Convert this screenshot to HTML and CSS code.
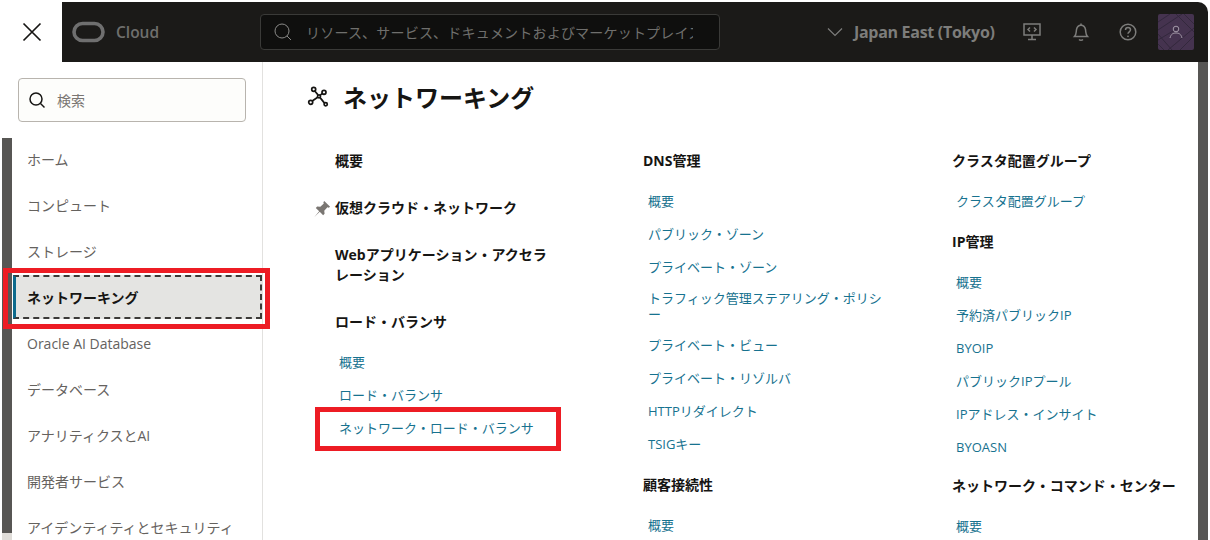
FILE: index.html
```html
<!DOCTYPE html>
<html lang="ja">
<head>
<meta charset="utf-8">
<title>ネットワーキング</title>
<link rel="stylesheet" href="styles.css">
</head>
<body>
<div class="window">
  <header class="topbar">
    <button class="close" aria-label="閉じる">
      <svg width="20" height="20" viewBox="0 0 20 20"><path d="M1.500 1.500 18.500 18.500M18.500 1.500 1.500 18.500" stroke="#161513" stroke-width="1.700" fill="none"/></svg>
    </button>
    <div class="bar">
      <svg class="logo" width="34" height="22" viewBox="0 0 34 22"><rect x="2" y="2.500" width="29" height="17" rx="8.500" fill="none" stroke="#6f6f6f" stroke-width="3.600"/></svg>
      <span class="cloud">Cloud</span>
      <div class="search">
        <svg width="20" height="20" viewBox="0 0 20 20"><circle cx="9" cy="9" r="7" fill="none" stroke="#8a8a88" stroke-width="1"/><path d="M14 14 18 18" stroke="#8a8a88" stroke-width="1"/></svg>
        <span class="search-text">リソース、サービス、ドキュメントおよびマーケットプレイス</span>
      </div>
      <div class="region">
        <svg width="16" height="10" viewBox="0 0 16 10"><path d="M1 1.500 8 8.500 15 1.500" fill="none" stroke="#7d7d7b" stroke-width="1.200"/></svg>
        <span>Japan East (Tokyo)</span>
      </div>
      <svg class="ico i-dev" width="20" height="20" viewBox="0 0 20 20" fill="none" stroke="#7d7d7b" stroke-width="1.500"><rect x="2" y="2" width="16" height="11"/><path d="M10 13v4M6 17.500h8M8 5.500 6 7.500l2 2M12 5.500l2 2-2 2"/></svg>
      <svg class="ico i-bell" width="20" height="20" viewBox="0 0 20 20" fill="none" stroke="#7d7d7b" stroke-width="1.500"><path d="M3.500 14.500c2-2 1.500-4 2-7C6 5 8 3.300 10 3.300S14 5 14.500 7.500c.5 3 0 5 2 7z"/><path d="M8 17.500c1 .9 3 .9 4 0M10 1.500v1.800"/></svg>
      <svg class="ico i-help" width="20" height="20" viewBox="0 0 20 20" fill="none" stroke="#7d7d7b" stroke-width="1.500"><circle cx="10" cy="10" r="7.800"/><path d="M7.500 8c0-1.500 1.100-2.500 2.500-2.500s2.500 1 2.500 2.300c0 2-2.500 2-2.500 4"/><circle cx="10" cy="14.300" r=".9" fill="#7d7d7b" stroke="none"/></svg>
      <div class="avatar">
        <svg width="36" height="36" viewBox="0 0 36 36"><g fill="none" stroke="#33283c" stroke-width="1"><path d="M0 8 12 0M0 16 24 0M0 26 20 14M22 36 36 22M10 36 36 14M26 0 36 10M18 0 36 18M0 20 14 36M0 30 6 36"/></g><circle cx="18" cy="15" r="2.800" fill="none" stroke="#a39aa8"/><path d="M12 24c1-4 3-5 6-5s5 1 6 5" fill="none" stroke="#a39aa8"/></svg>
      </div>
    </div>
  </header>

  <div class="body">
    <aside class="side">
      <div class="side-search">
        <svg width="18" height="18" viewBox="0 0 18 18"><circle cx="8" cy="8" r="6" fill="none" stroke="#161513" stroke-width="1.500"/><path d="M12.500 12.500 16.500 16.500" stroke="#161513" stroke-width="1.500"/></svg>
        <span>検索</span>
      </div>
      <div class="side-scroll">
        <div class="track"><div class="thumb"></div></div>
        <nav class="side-nav">
          <a class="side-item">ホーム</a>
          <a class="side-item">コンピュート</a>
          <a class="side-item">ストレージ</a>
          <a class="side-item active">ネットワーキング</a>
          <a class="side-item">Oracle AI Database</a>
          <a class="side-item">データベース</a>
          <a class="side-item">アナリティクスとAI</a>
          <a class="side-item">開発者サービス</a>
          <a class="side-item">アイデンティティとセキュリティ</a>
        </nav>
      </div>
      <div class="hl hl-side"></div>
    </aside>

    <main class="content">
      <h1 class="title">
        <svg width="20" height="20" viewBox="0 0 20 20" fill="none" stroke="#161513" stroke-width="1.700"><circle cx="5.700" cy="3.300" r="2"/><circle cx="16" cy="6.300" r="2"/><circle cx="2.700" cy="16.300" r="2"/><circle cx="17.700" cy="18.300" r="1.600"/><circle cx="11" cy="10.300" r="1.500"/><path d="M6.800 5 10 8.900M14.400 7.400 12.300 9.200M4.200 15 9.700 11.300M16.500 17.100 12.100 11.600"/></svg>
        <span>ネットワーキング</span>
      </h1>
      <div class="cols">
        <section class="col col1">
          <h2 class="head">概要</h2>
          <h2 class="head pinned">
            <svg class="pin" width="18" height="18" viewBox="0 0 16 16"><path d="M10 .8 15.200 6 14 6.800 12.800 6.400 10 9.500 10.300 12.300 9 13.500 6 10.500 1.200 15 5.500 10 2.500 7 3.700 5.700 6.500 6 9.600 3.200 9.200 2z" fill="#7a7672"/></svg>
            仮想クラウド・ネットワーク
          </h2>
          <h2 class="head">Webアプリケーション・アクセラレーション</h2>
          <h2 class="head">ロード・バランサ</h2>
          <ul class="links">
            <li>概要</li>
            <li>ロード・バランサ</li>
            <li>ネットワーク・ロード・バランサ</li>
          </ul>
          <div class="hl hl-link"></div>
        </section>
        <section class="col col2">
          <h2 class="head">DNS管理</h2>
          <ul class="links">
            <li>概要</li>
            <li>パブリック・ゾーン</li>
            <li>プライベート・ゾーン</li>
            <li class="long">トラフィック管理ステアリング・ポリシー</li>
            <li>プライベート・ビュー</li>
            <li>プライベート・リゾルバ</li>
            <li>HTTPリダイレクト</li>
            <li>TSIGキー</li>
          </ul>
          <h2 class="head">顧客接続性</h2>
          <ul class="links">
            <li>概要</li>
          </ul>
        </section>
        <section class="col col3">
          <h2 class="head">クラスタ配置グループ</h2>
          <ul class="links">
            <li>クラスタ配置グループ</li>
          </ul>
          <h2 class="head">IP管理</h2>
          <ul class="links links-ip">
            <li>概要</li>
            <li>予約済パブリックIP</li>
            <li>BYOIP</li>
            <li>パブリックIPプール</li>
            <li>IPアドレス・インサイト</li>
            <li>BYOASN</li>
          </ul>
          <h2 class="head">ネットワーク・コマンド・センター</h2>
          <ul class="links">
            <li>概要</li>
          </ul>
        </section>
      </div>
    </main>
    <div class="scrollbar"></div>
  </div>
</div>
</body>
</html>
```
FILE: styles.css
```css
* { box-sizing: border-box; }
html, body { margin: 0; padding: 0; height: 100%; overflow: hidden; background: #fff; }
body { font-family: "Open Sans", "Noto Sans CJK JP", "Noto Sans", sans-serif; color: #161513; }
.window { width: 1210px; height: 540px; padding-top: 2px; overflow: hidden; display: flex; flex-direction: column; }

.topbar { height: 60px; display: flex; flex: none; }
.close { width: 62px; height: 60px; border: 0; background: #fff; padding: 0 0 0 2px; display: flex; align-items: center; justify-content: center; }
.bar { flex: 1; margin-right: 2px; background: #1b1a18; border-top-right-radius: 10px; display: flex; align-items: center; }
.logo { margin-left: 10px; }
.cloud { margin-left: 10px; font-size: 15.500px; font-weight: 600; color: #6f6f6d; width: 144px; }
.search { width: 460px; height: 36px; background: #0f0f0e; border: 1px solid #3a3a38; border-radius: 4px; display: flex; align-items: center; padding-left: 12px; overflow: hidden; }
.search-text { margin-left: 13px; font-size: 14px; letter-spacing: .2px; color: #6f6f6d; width: 387px; white-space: nowrap; overflow: hidden; }
.region { margin-left: 107px; display: flex; align-items: center; color: #7d7d7b; font-size: 16px; font-weight: 700; width: 168px; letter-spacing: -.3px; }
.region span { margin-left: 11px; white-space: nowrap; }
.ico { flex: none; }
.i-dev { margin-left: 27px; }
.i-bell { margin-left: 29px; }
.i-help { margin-left: 27px; }
.avatar { margin-left: 20px; width: 36px; height: 36px; background: #45334f; border-radius: 2px; overflow: hidden; }
.avatar svg { display: block; }

.body { flex: 1; display: flex; min-height: 0; position: relative; }
.side { width: 263px; flex: none; border-right: 1px solid #e2e1df; position: relative; }
.side-search { margin: 16px 0 0 18px; width: 228px; height: 44px; border: 1px solid #b8b4ae; border-radius: 4px; background: #fdfdfb; display: flex; align-items: center; padding-left: 9px; font-size: 14px; color: #7a7672; }
.side-search span { margin-left: 11px; }
.side-scroll { display: flex; margin-top: 16px; }
.track { width: 10px; margin-left: 2px; height: 402px; background: #e0ddd9; flex: none; }
.thumb { height: 395px; background: #575654; }
.side-nav { flex: 1; display: flex; flex-direction: column; margin-top: -2px; }
.side-item { height: 46px; display: flex; align-items: center; padding-left: 15px; font-size: 14px; color: #65625e; white-space: nowrap; }
.side-item.active { margin: 1px 0 1px 1px; padding-left: 11px; width: 249px; height: 44px; background: #e4e4e2; border: 2px dashed #3b3a38; border-left: 3px solid #0d6a8c; font-weight: 700; color: #161513; }

.hl { position: absolute; border: 5px solid #ed1c24; pointer-events: none; }
.hl-side { left: 3px; top: 206px; width: 267px; height: 61px; }

.content { flex: 1; min-width: 0; padding: 18px 0 0 45px; }
.title { margin: 0; display: flex; align-items: center; font-size: 24px; font-weight: 700; height: 32px; }
.title svg { overflow: visible; }
.title span { margin-left: 15px; }
.cols { display: flex; margin-top: 39px; padding-left: 27px; }
.col { flex: none; position: relative; }
.col1 { width: 309px; }
.col2 { width: 308px; }
.col3 { width: 240px; }
.head { margin: 0; font-size: 14px; font-weight: 700; line-height: 20px; color: #161513; width: 220px; position: relative; }
.col2 .head { margin-left: -1px; }
.col1 .head { margin-bottom: 27px; }
.pinned .pin { position: absolute; left: -22px; top: 2px; }
.links { list-style: none; margin: 20px 0 21px; padding: 0 0 0 4px; font-size: 13px; color: #17728f; }
.links li { line-height: 20px; margin-bottom: 13px; width: 236px; }
.links li.long { line-height: 16px; }
.links-ip { margin-bottom: 19px; }
.col1 .head + .links { margin-top: -7px; }
.col3 .head { white-space: nowrap; }
.hl-link { left: -20px; top: 256px; width: 246px; height: 44px; }

.scrollbar { position: absolute; right: 2px; top: 0; width: 10px; height: 100%; background: #575654; }
```
